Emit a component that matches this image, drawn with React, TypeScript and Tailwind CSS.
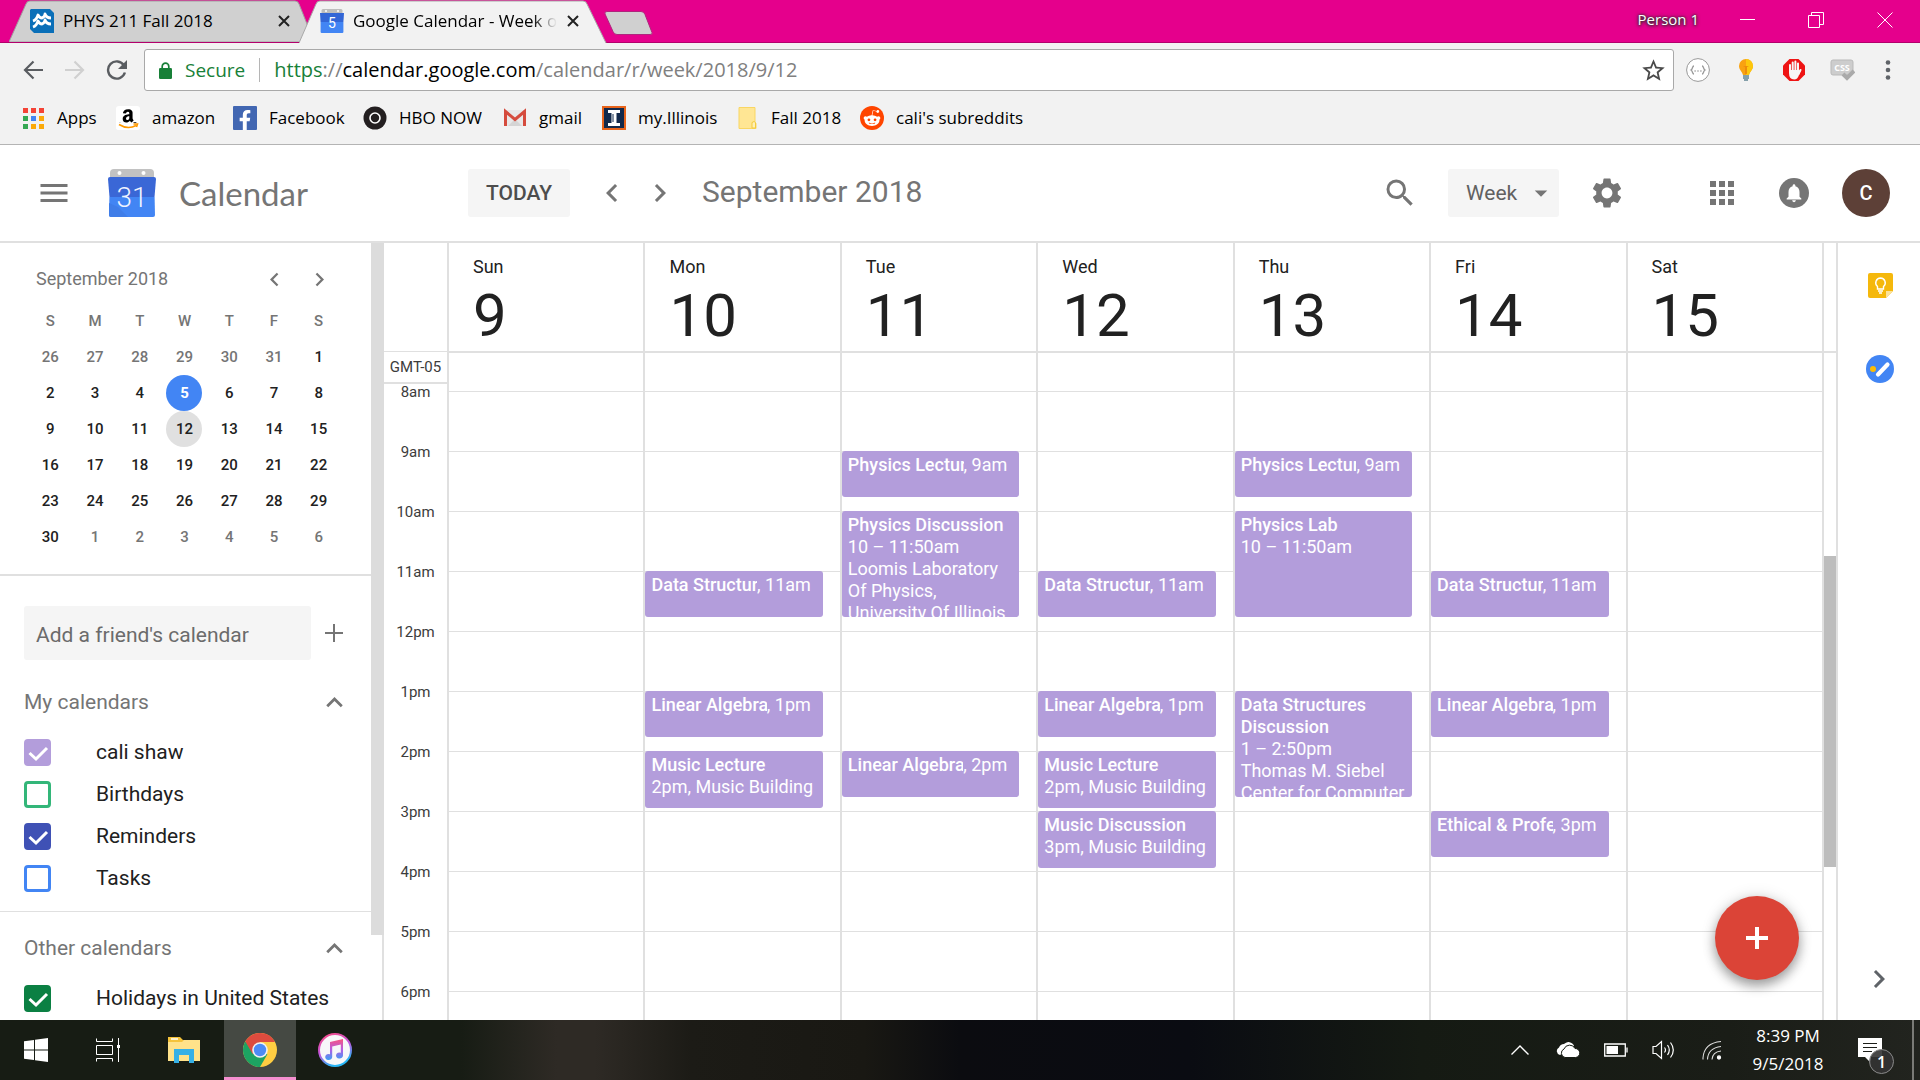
import React from "react";
import {
  MdApps,
  MdArrowDropDown,
  MdChevronLeft,
  MdChevronRight,
  MdExpandLess,
  MdMenu,
  MdNotifications,
  MdSearch,
  MdSettings,
  MdStarBorder,
} from "react-icons/md";
import { FaAmazon, FaFacebookF, FaRedditAlien } from "react-icons/fa";

/* ---------- Browser chrome ---------- */

function CalendarFavicon() {
  return (
    <svg width="24" height="24" viewBox="0 0 24 24" aria-hidden="true">
      <rect x="1.5" y="0" width="21" height="6" rx="1.5" fill="#bdbdbd" />
      <circle cx="6" cy="2" r="1" fill="#fff" />
      <circle cx="18" cy="2" r="1" fill="#fff" />
      <path d="M0 4h24l-.6 9H.6z" fill="#3366d6" />
      <path d="M.6 13h22.8v10a1 1 0 0 1-1 1H1.600a1 1 0 0 1-1-1z" fill="#4285f4" />
      <text x="12" y="19" textAnchor="middle" fontSize="14" fontFamily="Roboto, sans-serif" fill="#fff">
        5
      </text>
    </svg>
  );
}

function WaveFavicon() {
  return (
    <svg width="24" height="24" viewBox="0 0 24 24" aria-hidden="true">
      <path d="M1 0h19l4 4v20H4l-4-4V1z" fill="#0a6fb8" />
      <g stroke="#fff" strokeWidth="2.8" fill="none" strokeLinejoin="round">
        <path d="M3 12c3-1 4-3 5-6 1 2 2 3 4 3 2-1 3-2 3-4 1 3 3 4 6 4" />
        <path d="M3 18c3-1 4-3 5-6 1 2 2 3 4 3 2-1 3-2 3-4 1 3 3 4 6 4" />
      </g>
    </svg>
  );
}

function CloseGlyph() {
  return (
    <svg width="12" height="12" viewBox="0 0 12 12" aria-hidden="true">
      <path d="M1 1l10 10M11 1L1 11" stroke="#222" strokeWidth="2" />
    </svg>
  );
}

function TabStrip() {
  return (
    <div className="flex h-[43px] shrink-0 items-stretch border-b border-[#b3006c] bg-[#e5008c] pl-[9px]">
      <div className="relative flex w-[298px] shrink-0 items-center">
        <svg className="absolute inset-0 h-full w-full" viewBox="0 0 298 42" preserveAspectRatio="none" aria-hidden="true">
          <path d="M0 42L17 4q1-3 4-3h265q3 0 4 3l8 20v18z" fill="#d0d0d0" stroke="#a0a0a0" />
        </svg>
        <button className="relative ml-[21px] flex items-center gap-[9px] text-[17px] leading-6 text-black">
          <WaveFavicon />
          PHYS 211 Fall 2018
        </button>
        <button className="absolute right-[13px] p-1" aria-label="Close tab">
          <CloseGlyph />
        </button>
      </div>
      <div className="relative -ml-[8px] flex w-[308px] shrink-0 items-center">
        <svg className="absolute inset-x-0 top-0 h-[43px] w-full" viewBox="0 0 308 43" preserveAspectRatio="none" aria-hidden="true">
          <path d="M0 43L17 4q1-3 4-3h263q3 0 4 3l19 39z" fill="#f2f2f2" />
          <path d="M0 43L17 4q1-3 4-3h263q3 0 4 3l19 39" fill="none" stroke="#a8a8a8" />
        </svg>
        <button className="relative ml-[21px] flex items-center gap-[9px] text-[17px] leading-6 text-black">
          <CalendarFavicon />
          <span className="whitespace-nowrap bg-gradient-to-r from-black from-88% to-transparent bg-clip-text text-left text-transparent">
            Google Calendar - Week o
          </span>
        </button>
        <button className="absolute right-[24px] p-1" aria-label="Close tab">
          <CloseGlyph />
        </button>
      </div>
      <button className="ml-[-3px] self-start pt-[11px]" aria-label="New tab">
        <svg width="50" height="25" viewBox="0 0 50 25" aria-hidden="true">
          <path d="M3 .5h34q3 0 4 3l7 18q1 2-2 2H13q-3 0-4-3L1 3q-1-2.500 2-2.500z" fill="#d0d0d0" stroke="#b0257d" />
        </svg>
      </button>
      <div className="ml-auto flex items-start text-white">
        <span className="pt-[7px] text-[15px] leading-6 [text-shadow:0_0_4px_#333,0_1px_3px_#333,0_0_2px_#333]">Person 1</span>
        <button className="ml-[14px] grid h-[40px] w-[69px] place-items-center" aria-label="Minimize">
          <svg width="16" height="16" viewBox="0 0 16 16"><path d="M0 7.500h15" stroke="#fff" /></svg>
        </button>
        <button className="grid h-[40px] w-[68px] place-items-center" aria-label="Restore">
          <svg width="16" height="16" viewBox="0 0 16 16" fill="none" stroke="#fff"><path d="M.5 3.500h11v12H.5zM3.500 3.500v-3h12v12h-4" /></svg>
        </button>
        <button className="grid h-[40px] w-[70px] place-items-center" aria-label="Close">
          <svg width="16" height="16" viewBox="0 0 16 16"><path d="M.5.5l15 15M15.500.5l-15 15" stroke="#fff" /></svg>
        </button>
      </div>
    </div>
  );
}

function AddressBar() {
  return (
    <div className="flex h-[54px] shrink-0 items-center bg-[#f2f2f2]">
      <div className="flex w-[144px] shrink-0 items-center pl-[12px]">
        <button className="grid w-[42px] place-items-center" aria-label="Back">
          <svg width="20" height="20" viewBox="0 0 20 20" fill="none" stroke="#5a5d61" strokeWidth="2.2"><path d="M20 10H2M10.500 1.500L2 10l8.500 8.500" /></svg>
        </button>
        <button className="grid w-[42px] place-items-center" aria-label="Forward">
          <svg width="20" height="20" viewBox="0 0 20 20" fill="none" stroke="#d0d0d0" strokeWidth="2.2"><path d="M0 10h18M9.500 1.500L18 10l-8.500 8.500" /></svg>
        </button>
        <button className="grid w-[42px] place-items-center" aria-label="Reload">
          <svg width="22" height="20" viewBox="0 0 22 20"><path d="M18 5.500A8.600 8.600 0 1 0 18.900 12.500" fill="none" stroke="#5a5d61" strokeWidth="2.4" /><path d="M21 0v9h-9z" fill="#5a5d61" /></svg>
        </button>
      </div>
      <div className="flex h-[42px] min-w-0 flex-1 items-center rounded-[3px] border border-[#a9a9a9] bg-white pl-[14px] pr-[6px]">
        <svg width="13" height="17" viewBox="0 0 13 17" aria-hidden="true"><path d="M3.200 7V4.500a3.300 3.300 0 0 1 6.600 0V7" fill="none" stroke="#188038" strokeWidth="1.700" /><rect x="0" y="6" width="13" height="11" rx="1.300" fill="#188038" /></svg>
        <span className="ml-[13px] text-[19px] leading-7 text-[#188038]">Secure</span>
        <span className="ml-[14px] h-6 w-px bg-[#b5b5b5]" />
        <div role="textbox" aria-label="Address" contentEditable suppressContentEditableWarning className="ml-[14px] flex-1 whitespace-nowrap text-[20px] leading-7 text-[#808080] outline-none">
          <span className="text-[#188038]">https</span>://<span className="text-black">calendar.google.com</span>/calendar/r/week/2018/9/12
        </div>
        <button aria-label="Bookmark this page" className="text-[#4a4a4a]">
          <MdStarBorder size={27} />
        </button>
      </div>
      <div className="flex w-[246px] shrink-0 items-center">
        <button className="grid w-[48px] place-items-center" aria-label="JSON formatter">
          <svg width="24" height="24" viewBox="0 0 24 24" fill="none" stroke="#999">
            <circle cx="12" cy="12" r="11.400" fill="#fff" />
            <path d="M8 8c-2 0-1 3-3 4 2 1 1 4 3 4M16 8c2 0 1 3 3 4-2 1-1 4-3 4" strokeWidth="1.300" />
            <path d="M8.500 13h7" strokeDasharray="1.200 1.700" strokeWidth="1.300" />
          </svg>
        </button>
        <button className="grid w-[48px] place-items-center" aria-label="Light bulb">
          <svg width="24" height="24" viewBox="0 0 24 24">
            <path d="M12 1a7 7 0 0 0-7 7c0 4 3 5 4 9h6c1-4 4-5 4-9a7 7 0 0 0-7-7z" fill="#f9a211" />
            <path d="M12 1a7 7 0 0 1 7 7c0 4-3 5-4 9h-3z" fill="#fdc70c" />
            <path d="M9 8h6l-2 1v7h-2V9z" fill="#ee8c0a" />
            <path d="M9 17h6v4h-1v2h-4v-2H9z" fill="#84a0ab" />
          </svg>
        </button>
        <button className="grid w-[48px] place-items-center" aria-label="Ad blocker">
          <svg width="24" height="24" viewBox="0 0 24 24">
            <path d="M7.500 1h9L23 7.500v9L16.500 23h-9L1 16.500v-9z" fill="#ee1414" />
            <g fill="none" stroke="#f7f7f7" strokeWidth="2" strokeLinecap="round">
              <path d="M8 7v7M10.700 4.500V13M13.400 3.500V13M16 5.500V14M18.500 12l-2 4" />
            </g>
            <path d="M7 12h10l1.500 1-1.500 4q-1.500 4.500-4.800 4.500Q7 21.500 7 15z" fill="#f7f7f7" />
          </svg>
        </button>
        <button className="grid w-[48px] place-items-center" aria-label="CSS viewer">
          <svg width="25" height="24" viewBox="0 0 25 24">
            <rect x="1" y="2" width="22" height="15" rx="2" fill="#cdcdcd" stroke="#b9b9b9" />
            <text x="12" y="13" textAnchor="middle" fontSize="9" fontWeight="700" fontFamily="Open Sans, sans-serif" fill="#fff">CSS</text>
            <path d="M13 16l4 4 7-7" stroke="#aaa" strokeWidth="4" fill="none" />
          </svg>
        </button>
        <button className="grid w-[44px] place-items-center" aria-label="Menu">
          <svg width="6" height="20" viewBox="0 0 6 20" fill="#5f6368"><circle cx="3" cy="2.500" r="2.300" /><circle cx="3" cy="10" r="2.300" /><circle cx="3" cy="17.500" r="2.300" /></svg>
        </button>
      </div>
    </div>
  );
}

const APP_COLORS = ["#f44336", "#f44336", "#f44336", "#34a853", "#4285f4", "#fbaa0a", "#34a853", "#fbaa0a", "#fbaa0a"];

const BOOKMARKS = [
  {
    label: "Apps",
    width: "w-[95px]",
    icon: (
      <svg width="24" height="24" viewBox="0 0 24 24">
        {APP_COLORS.map((c, i) => (
          <rect key={i} x={2 + (i % 3) * 8} y={2 + Math.floor(i / 3) * 8} width="5" height="5" fill={c} />
        ))}
      </svg>
    ),
  },
  {
    label: "amazon",
    width: "w-[117px]",
    icon: (
      <span className="relative grid h-6 w-6 place-items-center overflow-hidden rounded-[3px] bg-white text-black">
        <FaAmazon size={20} />
        <svg className="absolute inset-x-0 bottom-0" width="24" height="7" viewBox="0 0 24 7"><path d="M0 0h24v7H0z" fill="#fff" /><path d="M3 1.500q9 5.500 17 1M17.500 1h4l-1 3" stroke="#f90" strokeWidth="1.600" fill="none" /></svg>
      </span>
    ),
  },
  {
    label: "Facebook",
    width: "w-[130px]",
    icon: (
      <span className="flex h-6 w-6 items-end justify-end overflow-hidden rounded-[1px] bg-[#4267b2] pr-[2px] text-white">
        <FaFacebookF size={20} />
      </span>
    ),
  },
  {
    label: "HBO NOW",
    width: "w-[140px]",
    icon: (
      <svg width="24" height="24" viewBox="0 0 24 24"><circle cx="12" cy="12" r="11.500" fill="#231f20" /><circle cx="12" cy="12" r="5" fill="#231f20" stroke="#fff" strokeWidth="1.600" /></svg>
    ),
  },
  {
    label: "gmail",
    width: "w-[99px]",
    icon: (
      <svg width="24" height="24" viewBox="0 0 24 24"><path d="M2 4h20v16H2z" fill="#e8e8e8" /><path d="M5 20l7-7 7 7z" fill="#d5d5d5" /><path d="M2.500 20V5.500L12 13.500l9.500-8V20" fill="none" stroke="#d54b3d" strokeWidth="3" /></svg>
    ),
  },
  {
    label: "my.Illinois",
    width: "w-[133px]",
    icon: (
      <svg width="24" height="24" viewBox="0 0 24 24"><rect x="1" y="1" width="22" height="22" fill="#13294b" stroke="#e8641b" strokeWidth="2" /><path d="M6 4h12v3h-3.500v10H18v3H6v-3h3.500V7H6z" fill="#fff" /><path d="M11 8v8" stroke="#13294b" /></svg>
    ),
  },
  {
    label: "Fall 2018",
    width: "w-[125px]",
    icon: (
      <svg width="24" height="24" viewBox="0 0 24 24"><path d="M4 1.500h16v15l1 1v5H4z" fill="#ffe694" stroke="#f9d663" /><path d="M17 22v-5.500l2-1 1.500 1V22z" fill="#fff0b8" stroke="#f4cb3c" /></svg>
    ),
  },
  {
    label: "cali's subreddits",
    width: "w-auto",
    icon: (
      <span className="grid h-6 w-6 place-items-center rounded-full bg-[#ff4500] text-white">
        <FaRedditAlien size={18} />
      </span>
    ),
  },
];

function BookmarksBar() {
  return (
    <nav className="flex h-[48px] shrink-0 items-start border-b border-[#b4b4b4] bg-[#f2f2f2] pl-[21px] pt-[9px]">
      {BOOKMARKS.map((b) => (
        <a key={b.label} href="#" className={`flex shrink-0 items-center gap-[12px] whitespace-nowrap text-[17px] leading-6 text-black ${b.width}`}>
          {b.icon}
          {b.label}
        </a>
      ))}
    </nav>
  );
}

/* ---------- Calendar header ---------- */

function CalendarLogo() {
  return (
    <svg width="50" height="48" viewBox="0 0 50 48" aria-hidden="true">
      <rect x="3" y="0" width="44" height="14" rx="4" fill="#c2c2c2" />
      <circle cx="12.500" cy="4" r="2" fill="#fff" />
      <circle cx="36.500" cy="4" r="2" fill="#fff" />
      <path d="M3 8h44q2 0 2 2l-1.500 18h-45L1 10q0-2 2-2z" fill="#3a67d6" />
      <path d="M2.400 28h45.200L48 46q0 2-2 2H4q-2 0-2-2z" fill="#4285f4" />
      <path d="M11 38l10 10H4q-2 0-2-2V34z" fill="#3f7de8" />
      <text x="25" y="38" textAnchor="middle" fontSize="28" fontWeight="300" fontFamily="Roboto, sans-serif" fill="#f0f4ff">
        31
      </text>
    </svg>
  );
}

function Header() {
  return (
    <header className="flex h-[98px] shrink-0 items-center border-b-2 border-[#e0e0e0] bg-white font-[Roboto,sans-serif] text-[#757575]">
      <div className="flex w-[468px] shrink-0 items-center pl-[36px]">
        <button aria-label="Main menu">
          <MdMenu size={36} />
        </button>
        <a href="#" className="ml-[35px] flex items-center gap-[22px]">
          <CalendarLogo />
          <span className="font-[Lato,sans-serif] text-[33px] leading-10">Calendar</span>
        </a>
      </div>
      <button className="h-[48px] w-[102px] shrink-0 rounded-[3px] bg-[#f5f5f5] text-[21px] font-medium leading-7 text-[#4d4d4d]">TODAY</button>
      <button className="ml-[18px] grid h-[48px] w-[48px] place-items-center" aria-label="Previous week">
        <MdChevronLeft size={36} />
      </button>
      <button className="grid h-[48px] w-[48px] place-items-center" aria-label="Next week">
        <MdChevronRight size={36} />
      </button>
      <h1 className="ml-[18px] whitespace-nowrap pb-[2px] text-[30px] leading-10">September 2018</h1>
      <div className="ml-auto flex items-center pr-[30px]">
        <button className="grid h-[48px] w-[48px] place-items-center" aria-label="Search">
          <MdSearch size={36} />
        </button>
        <div className="relative ml-[24px] flex items-center">
          <select aria-label="View" className="h-[48px] w-[111px] appearance-none rounded-[3px] bg-[#f5f5f5] pl-[18px] text-[21px] leading-7 text-[#616161]">
            <option>Week</option>
            <option>Day</option>
            <option>Month</option>
          </select>
          <MdArrowDropDown size={30} className="pointer-events-none absolute right-[3px]" />
        </div>
        <button className="ml-[24px] grid h-[48px] w-[48px] place-items-center" aria-label="Settings">
          <MdSettings size={36} />
        </button>
        <button className="ml-[67px] grid h-[48px] w-[48px] place-items-center" aria-label="Google apps">
          <MdApps size={36} />
        </button>
        <button className="ml-[24px] grid h-[48px] w-[48px] place-items-center" aria-label="Notifications">
          <span className="grid h-[30px] w-[30px] place-items-center rounded-full bg-[#757575] text-white">
            <MdNotifications size={22} />
          </span>
        </button>
        <button className="ml-[24px] h-[48px] w-[48px] rounded-full bg-[#5d4037] text-[20px] font-medium leading-7 text-white" aria-label="Account">
          C
        </button>
      </div>
    </header>
  );
}

/* ---------- Sidebar ---------- */

const MINI_DAYS = [26, 27, 28, 29, 30, 31, ...Array.from({ length: 30 }, (_, i) => i + 1), 1, 2, 3, 4, 5, 6];

function miniDayClass(i: number) {
  if (i === 10) return "bg-[#4285f4] text-white font-bold";
  if (i === 17) return "bg-[#e0e0e0] text-[#212121]";
  if (i < 6 || i > 35) return "text-[#757575]";
  return "text-[#212121]";
}

function MiniCalendar() {
  return (
    <section className="border-b-2 border-[#e0e0e0] pb-[19px] pl-[28px] pt-[18px]">
      <div className="flex h-[36px] items-center pl-[8px] text-[#757575]">
        <h2 className="flex-1 text-[18px] leading-6">September 2018</h2>
        <button className="grid w-[45px] place-items-center" aria-label="Previous month">
          <MdChevronLeft size={27} />
        </button>
        <button className="mr-[29px] grid w-[45px] place-items-center" aria-label="Next month">
          <MdChevronRight size={27} />
        </button>
      </div>
      <div className="mt-[6px] grid w-[313px] grid-cols-7 justify-items-center text-[15px] font-medium leading-[36px]">
        {["S", "M", "T", "W", "T", "F", "S"].map((d, i) => (
          <span key={i} className="text-[#757575]">{d}</span>
        ))}
        {MINI_DAYS.map((d, i) => (
          <button key={i} className={`h-[36px] w-[36px] rounded-full ${miniDayClass(i)}`}>{d}</button>
        ))}
      </div>
    </section>
  );
}

const MY_CALENDARS = [
  { name: "cali shaw", checked: true, color: "border-[#b39ddb] checked:bg-[#b39ddb]" },
  { name: "Birthdays", checked: false, color: "border-[#33b679] checked:bg-[#33b679]" },
  { name: "Reminders", checked: true, color: "border-[#3f51b5] checked:bg-[#3f51b5]" },
  { name: "Tasks", checked: false, color: "border-[#4285f4] checked:bg-[#4285f4]" },
];
const OTHER_CALENDARS = [{ name: "Holidays in United States", checked: true, color: "border-[#0b8043] checked:bg-[#0b8043]" }];

function CalendarList({ items }: { items: typeof MY_CALENDARS }) {
  return (
    <div className="mt-[11px]">
      {items.map((c) => (
        <label key={c.name} className="flex h-[42px] items-center text-[21px] leading-7 text-[#212121]">
          <span className="relative grid">
            <input type="checkbox" defaultChecked={c.checked} className={`peer h-[27px] w-[27px] appearance-none rounded-[4px] border-3 ${c.color}`} />
            <svg className="pointer-events-none absolute inset-0 hidden peer-checked:block" width="27" height="27" viewBox="0 0 27 27" fill="none" stroke="#fff" strokeWidth="3">
              <path d="M5.500 14l6.500 6L23 9" />
            </svg>
          </span>
          <span className="ml-[45px] whitespace-nowrap">{c.name}</span>
        </label>
      ))}
    </div>
  );
}

function ListHeading({ title }: { title: string }) {
  return (
    <div className="flex h-[36px] items-center justify-between pr-[19px] text-[#757575]">
      <h2 className="text-[21px] leading-7">{title}</h2>
      <button aria-label={`Collapse ${title}`} className="grid h-[36px] w-[36px] place-items-center">
        <MdExpandLess size={33} />
      </button>
    </div>
  );
}

function Sidebar() {
  return (
    <aside className="flex w-[384px] shrink-0 overflow-hidden">
      <div className="flex-1 overflow-hidden">
        <MiniCalendar />
        <section className="border-b border-[#e0e0e0] pb-[12px] pl-[24px] pt-[30px]">
          <div className="flex items-center">
            <input aria-label="Add a friend's calendar" placeholder="Add a friend's calendar" className="h-[54px] w-[287px] rounded-[3px] bg-[#f5f5f5] px-[12px] pt-[3px] text-[21px] text-[#212121] placeholder:text-[#6b6b6b]" />
            <button aria-label="Add other calendars" className="ml-[5px] grid h-[36px] w-[36px] place-items-center">
              <svg width="18" height="18" viewBox="0 0 18 18"><path d="M9 0v18M0 9h18" stroke="#757575" strokeWidth="2" /></svg>
            </button>
          </div>
          <div className="mt-[24px]">
            <ListHeading title="My calendars" />
          </div>
          <CalendarList items={MY_CALENDARS} />
        </section>
        <section className="pl-[24px] pt-[18px]">
          <ListHeading title="Other calendars" />
          <CalendarList items={OTHER_CALENDARS} />
        </section>
      </div>
      <div className="flex w-[13px] flex-col">
        <div className="h-[89%] bg-[#dcdcdc]" />
        <div className="flex-1 border-r-2 border-[#e0e0e0]" />
      </div>
    </aside>
  );
}

/* ---------- Week grid ---------- */

const HOURS = ["8am", "9am", "10am", "11am", "12pm", "1pm", "2pm", "3pm", "4pm", "5pm", "6pm"];
const HOUR_HEIGHT = 60;
const FIRST_LINE = 38;

type CalEvent = { title: string; start: number; height: number; inline?: string; lines?: string[] };

const lecture = (title: string, start: number, inline: string): CalEvent => ({ title, start, height: 46, inline });
const musicLecture: CalEvent = { title: "Music Lecture", start: 14, height: 57, lines: ["2pm, Music Building"] };

const DAYS: { name: string; date: number; events: CalEvent[] }[] = [
  { name: "Sun", date: 9, events: [] },
  { name: "Mon", date: 10, events: [lecture("Data Structur", 11, "11am"), lecture("Linear Algebra", 13, "1pm"), musicLecture] },
  {
    name: "Tue",
    date: 11,
    events: [
      lecture("Physics Lectur", 9, "9am"),
      { title: "Physics Discussion", start: 10, height: 106, lines: ["10 – 11:50am", "Loomis Laboratory Of Physics, University Of Illinois"] },
      lecture("Linear Algebra", 14, "2pm"),
    ],
  },
  {
    name: "Wed",
    date: 12,
    events: [
      lecture("Data Structur", 11, "11am"),
      lecture("Linear Algebra", 13, "1pm"),
      musicLecture,
      { title: "Music Discussion", start: 15, height: 57, lines: ["3pm, Music Building"] },
    ],
  },
  {
    name: "Thu",
    date: 13,
    events: [
      lecture("Physics Lectur", 9, "9am"),
      { title: "Physics Lab", start: 10, height: 106, lines: ["10 – 11:50am"] },
      { title: "Data Structures Discussion", start: 13, height: 106, lines: ["1 – 2:50pm", "Thomas M. Siebel Center for Computer"] },
    ],
  },
  { name: "Fri", date: 14, events: [lecture("Data Structur", 11, "11am"), lecture("Linear Algebra", 13, "1pm"), lecture("Ethical & Profe", 15, "3pm")] },
  { name: "Sat", date: 15, events: [] },
];

function EventCard({ event }: { event: CalEvent }) {
  return (
    <button
      className="absolute left-0 right-[17px] flex flex-col items-stretch justify-start overflow-hidden rounded-[3px] bg-[#b39ddb] pl-[6px] pr-[4px] pt-[3px] text-left text-[18px] leading-[22px] text-white"
      style={{ top: FIRST_LINE + (event.start - 8) * HOUR_HEIGHT, height: event.height }}
    >
      {event.inline ? (
        <span className="flex whitespace-nowrap pr-[8px]">
          <span className="min-w-0 overflow-hidden font-medium">{event.title}</span>
          <span className="shrink-0">, {event.inline}</span>
        </span>
      ) : (
        <>
          <span className="font-medium">{event.title}</span>
          {event.lines?.map((l) => <span key={l}>{l}</span>)}
        </>
      )}
    </button>
  );
}

function WeekGrid() {
  return (
    <main className="flex min-w-0 flex-1 overflow-hidden text-[#212121]">
      <div className="flex w-[65px] shrink-0 flex-col border-r-2 border-[#e0e0e0] text-center text-[15px] leading-4 text-[#3c3c3c]">
        <div className="h-[109px] shrink-0 border-b border-[#e0e0e0]" />
        <div className="h-[32px] shrink-0 whitespace-nowrap border-b-2 border-[#e0e0e0] pt-[7px]">GMT-05</div>
        {HOURS.map((h) => (
          <div key={h} className="h-[60px] shrink-0">{h}</div>
        ))}
      </div>
      {DAYS.map((day) => (
        <div key={day.name} className="flex min-w-0 flex-1 flex-col border-r-2 border-[#e0e0e0]">
          <div className="h-[110px] shrink-0 border-b-2 border-[#e0e0e0] pl-[24px] pt-[12px]">
            <div className="text-[18px] leading-6">{day.name}</div>
            <div className="mt-[5px] text-[60px] leading-[64px]">{day.date}</div>
          </div>
          <div className="relative min-h-0 flex-1 overflow-hidden">
            <div className="h-[39px] border-b border-[#e0e0e0]" />
            {HOURS.slice(1).map((h) => (
              <div key={h} className="h-[60px] border-b border-[#e0e0e0]" />
            ))}
            {day.events.map((e) => (
              <EventCard key={e.title + e.start} event={e} />
            ))}
          </div>
        </div>
      ))}
      <div className="flex w-[14px] shrink-0 flex-col border-r-2 border-[#e0e0e0]">
        <div className="h-[110px] shrink-0 border-b-2 border-[#e0e0e0]" />
        <div className="basis-[203px]" />
        <div className="h-[311px] bg-[#bdbdbd]" />
      </div>
    </main>
  );
}

function SidePanel() {
  return (
    <div className="relative flex w-[82px] shrink-0 flex-col items-center bg-white pt-[30px]">
      <button aria-label="Keep" className="h-[25px] pl-[2px]">
        <svg width="25" height="25" viewBox="0 0 25 25">
          <path d="M2 0h21q2 0 2 2v16l-7 7H2q-2 0-2-2V2q0-2 2-2z" fill="#f5b80c" />
          <path d="M18 18h7l-7 7z" fill="#fbe29a" />
          <path d="M12.500 5a4.800 4.800 0 0 0-3 8.500V16h6v-2.500a4.800 4.800 0 0 0-3-8.500zM10 18h5M11 20h3" fill="none" stroke="#fff" strokeWidth="1.400" />
        </svg>
      </button>
      <button aria-label="Tasks" className="mt-[57px] h-[28px] pl-[2px]">
        <svg width="28" height="28" viewBox="0 0 28 28">
          <circle cx="14" cy="14" r="14" fill="#4285f4" />
          <circle cx="7" cy="14" r="3" fill="#fbbc05" />
          <path d="M12 19.500L21.500 9.500" stroke="#fff" strokeWidth="4.200" strokeLinecap="round" />
        </svg>
      </button>
      <button aria-label="Hide side panel" className="mb-[23px] mt-auto text-[#5f6368]">
        <MdChevronRight size={36} />
      </button>
      <button aria-label="Create event" className="absolute bottom-[40px] right-[121px] grid h-[84px] w-[84px] place-items-center rounded-full bg-[#db4437] shadow-[0_6px_12px_rgba(0,0,0,0.35),0_0_16px_rgba(0,0,0,0.12)]">
        <svg width="22" height="22" viewBox="0 0 22 22"><path d="M11 0v22M0 11h22" stroke="#fff" strokeWidth="4" /></svg>
      </button>
    </div>
  );
}

/* ---------- Taskbar ---------- */

function Taskbar() {
  return (
    <footer className="flex h-[60px] shrink-0 items-stretch bg-[linear-gradient(90deg,#171c14_0%,#171c14_24%,#2e2a25_29%,#2e2a25_31%,#1c1b16_36%,#191813_45%,#0b0c10_50%,#0a0c12_62%,#151a13_74%,#1a1d17_90%,#22241f_100%)] text-white">
      <button aria-label="Start" className="grid w-[72px] place-items-center">
        <svg width="24" height="24" viewBox="0 0 24 24" fill="#fff"><path d="M0 3.200l10-1.300v9.600H0zM11 1.800L24 0v11.500H11zM0 12.500h10v9.600L0 20.800zM11 12.500h13V24l-13-1.800z" /></svg>
      </button>
      <button aria-label="Task view" className="grid w-[72px] place-items-center">
        <svg width="25" height="24" viewBox="0 0 25 24" fill="none" stroke="#fff"><path d="M.5.500v3h16v-3M.5 7.500h16v9H.5zM.5 23.500v-3h16v3M22.500 0v24" /><rect x="21" y="7" width="3" height="3" fill="#fff" stroke="none" /></svg>
      </button>
      <button aria-label="File Explorer" className="grid w-[80px] place-items-center">
        <svg width="32" height="28" viewBox="0 0 32 28">
          <path d="M0 1h12l3 3h17v21H0z" fill="#f5c33b" />
          <path d="M0 6h14l2-2h16v21H0z" fill="#ffe28a" />
          <path d="M3 3h7" stroke="#fff" strokeWidth="1.500" />
          <path d="M6 13h20v14h-5v-8H11v8H6z" fill="#36b0e6" />
        </svg>
      </button>
      <button aria-label="Google Chrome" className="grid w-[72px] place-items-center border-b-3 border-[#f58fd0] bg-[#454943] pt-[3px]">
        <svg width="34" height="34" viewBox="0 0 34 34">
          <circle cx="17" cy="17" r="17" fill="#ffcd42" />
          <path d="M17 17L2.300 8.500A17 17 0 0 0 17 34l7.400-12.700z" fill="#1da362" />
          <path d="M17 9h15A17 17 0 0 0 2.300 8.500L9.600 21z" fill="#dd4b3e" />
          <circle cx="17" cy="17" r="7.800" fill="#f1f1f1" />
          <circle cx="17" cy="17" r="6.200" fill="#4c8bf5" />
        </svg>
      </button>
      <button aria-label="iTunes" className="grid w-[78px] place-items-center">
        <svg width="34" height="34" viewBox="0 0 34 34">
          <defs>
            <linearGradient id="ring" x1="0" y1="0" x2="0.4" y2="1"><stop offset="0" stopColor="#fb4a7b" /><stop offset=".55" stopColor="#c355e0" /><stop offset="1" stopColor="#28b6f6" /></linearGradient>
            <linearGradient id="note" x1="0" y1="0" x2="0" y2="1"><stop offset="0" stopColor="#f9547e" /><stop offset=".5" stopColor="#b65be3" /><stop offset="1" stopColor="#3aa0f5" /></linearGradient>
          </defs>
          <circle cx="17" cy="17" r="16" fill="#f7f7f9" stroke="url(#ring)" strokeWidth="2" />
          <path d="M12 9l13-3v16.500a3.500 3 0 1 1-2.200-2.800V11.500l-8.600 2V24a3.500 3 0 1 1-2.200-2.800z" fill="url(#note)" />
        </svg>
      </button>
      <div className="ml-auto flex items-stretch">
        <button aria-label="Show hidden icons" className="grid w-[48px] place-items-center">
          <svg width="18" height="10" viewBox="0 0 18 10"><path d="M.5 9.500L9 1l8.500 8.500" stroke="#fff" strokeWidth="1.400" fill="none" /></svg>
        </button>
        <button aria-label="OneDrive" className="grid w-[48px] place-items-center">
          <svg width="24" height="16" viewBox="0 0 24 16"><path d="M4 13a4 4 0 0 1-1-7.500A5.500 5.500 0 0 1 8 2a6 6 0 0 1 10 2z" fill="#fff" /><path d="M9 15.500a4.500 4.500 0 0 1-1-8.500 6 6 0 0 1 11-.5 4.500 4.500 0 0 1 .5 9z" fill="#fff" stroke="#171c14" /></svg>
        </button>
        <button aria-label="Battery" className="grid w-[48px] place-items-center">
          <svg width="24" height="14" viewBox="0 0 24 14"><path d="M.7 1h20.600v12H.7zM23 4.500v5" fill="none" stroke="#fff" strokeWidth="1.300" /><path d="M2.500 3H14v8H2.500z" fill="#fff" /></svg>
        </button>
        <button aria-label="Volume" className="grid w-[48px] place-items-center">
          <svg width="24" height="20" viewBox="0 0 24 20" fill="none" stroke="#fff" strokeWidth="1.200"><path d="M1 6.500h3l5.500-5v17L4 13.500H1zM12.500 7.500q2 2.500 0 5M15.500 5q3.600 5 0 10M18.500 2.500q5.600 7.500 0 15" /></svg>
        </button>
        <button aria-label="Wi-Fi" className="grid w-[48px] place-items-center">
          <svg width="20" height="20" viewBox="0 0 20 20" fill="none" stroke="#fff" strokeWidth="1.100"><path d="M1 19.500V18Q2 3 19 1.500M5.500 19.500Q6 8 19 6.500M10 19.500Q10.500 12 19 11" opacity=".85" /><circle cx="17" cy="17.500" r="1.600" fill="#fff" /></svg>
        </button>
        <button className="w-[104px] text-center text-[17px] leading-[28px]">
          8:39 PM
          <br />
          9/5/2018
        </button>
        <button aria-label="Notifications" className="relative w-[72px]">
          <svg className="absolute left-[18px] top-[18px]" width="24" height="25" viewBox="0 0 24 25"><path d="M0 0h24v19H13l0 6-6-6H0z" fill="#fff" /><path d="M5 5.500h14M5 9.500h14M5 13.500h9" stroke="#1c1e19" /></svg>
          <span className="absolute left-[29px] top-[29px] grid h-[25px] w-[25px] place-items-center rounded-full border border-[#8a8a8a] bg-[#333333]/90 text-[16px] font-semibold leading-5">1</span>
        </button>
        <div className="w-[8px] border-l-2 border-[#7a7b77]" />
      </div>
    </footer>
  );
}

export default function App() {
  return (
    <div className="flex h-screen flex-col overflow-hidden bg-white font-['Open_Sans',sans-serif]">
      <TabStrip />
      <AddressBar />
      <BookmarksBar />
      <Header />
      <div className="flex min-h-0 flex-1 font-[Roboto,sans-serif]">
        <Sidebar />
        <WeekGrid />
        <SidePanel />
      </div>
      <Taskbar />
    </div>
  );
}
